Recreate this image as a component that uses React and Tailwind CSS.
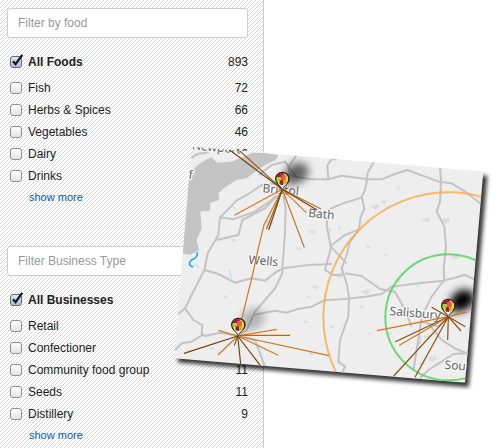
import React from "react";

const foods = [
  ["Fish", 72],
  ["Herbs & Spices", 66],
  ["Vegetables", 46],
  ["Dairy", 16],
  ["Drinks", 14],
];

const businesses = [
  ["Retail", 64],
  ["Confectioner", 13],
  ["Community food group", 11],
  ["Seeds", 11],
  ["Distillery", 9],
];

function FilterRow({ label, count, all = false }) {
  return (
    <label className="flex h-[22px] items-center pl-[3px]">
      <span className="relative flex h-3 w-3 shrink-0">
        <input
          type="checkbox"
          defaultChecked={all}
          className="peer h-3 w-3 appearance-none rounded-[3px] border border-[#909090] bg-linear-to-b from-white to-[#e4e4e4] checked:border-[#646a78] checked:from-[#e2e7f0] checked:to-[#b5bccb]"
        />
        <svg
          viewBox="0 0 14 14"
          className="pointer-events-none absolute -top-[2px] left-0 hidden h-[14px] w-[14px] peer-checked:block"
          fill="none"
          stroke="#151b2b"
          strokeWidth="2.3"
          aria-hidden="true"
        >
          <path d="M3 7.2 5.6 10.2 12.2 .8" />
        </svg>
      </span>
      <span className={all ? "ml-[6px] flex-1 font-bold" : "ml-[6px] flex-1"}>{label}</span>
      <span>{count}</span>
    </label>
  );
}

function FilterGroup({ placeholder, allLabel, total, items }) {
  return (
    <section className="pr-[15px] pl-[7px]">
      <input
        type="text"
        placeholder={placeholder}
        aria-label={placeholder}
        className="block h-[30px] w-full rounded-[3px] border border-[#ccc] bg-white px-[10px] text-[12px] outline-none placeholder:text-[#999]"
      />
      <div className="pt-[13px] pb-1">
        <FilterRow label={allLabel} count={total} all />
      </div>
      <div>
        {items.map(([label, count]) => (
          <FilterRow key={label} label={label} count={count} />
        ))}
      </div>
      <a href="#" className="ml-[22px] block w-fit text-[11px] leading-5 text-[#0062ad]">
        show more
      </a>
    </section>
  );
}

const roads = [
  "M80 55 Q95 38 118 40 L150 28",
  "M165 232 L215 182 250 162 290 135 352 128 375 105 400 112 440 118 490 118 530 107 610 118 650 118 690 102 728 90 770 106 822 125 860 130 905 158 945 190",
  "M490 118 L487 75 500 58 515 58",
  "M626 67 L608 98 605 125 600 150 590 170 598 205 586 235 582 270 555 305 545 345 530 385 545 430 552 470 550 530 525 600 520 665 540 680 530 700",
  "M825 82 L828 125 825 185 815 215 838 260 843 320 836 385 838 420 800 470 770 530 760 600 745 690",
  "M590 173 L540 188 510 200 490 210 485 255 497 320 545 370",
  "M582 268 L540 285 500 315 488 360 480 390 505 405 530 405",
  "M165 232 L160 285 128 340 118 390 85 455 60 505 40 522",
  "M155 300 L220 285 232 240 300 205 352 150 362 205 360 280 352 385 352 400",
  "M165 232 L205 238 270 215 320 180 352 150",
  "M118 390 L160 402 210 428 260 415 300 422 335 395 355 385 430 375 500 372",
  "M352 400 L330 445 300 480 270 515 245 570 218 588",
  "M265 525 L330 512 365 518 395 508 440 500 480 480 530 478 600 470 650 462 680 440 760 430 835 422 900 405 935 422",
  "M60 505 L85 540 112 555 110 580 120 588 165 578 218 588 270 600 285 640 300 680",
  "M115 583 L80 605 50 610 30 630",
  "M352 148 L375 105 370 80 395 45",
  "M395 112 L360 65 320 75 280 105",
  "M540 400 L590 408 645 447 690 455 715 500 740 560",
  "M850 530 L820 560 790 550 770 545",
  "M790 550 L830 600 870 625 910 642",
  "M910 640 L865 642 830 665 790 690 765 715",
];

const routes = [
  ["#70400f", "M352 148 L190 27"],
  ["#8b5014", "M352 148 L220 29"],
  ["#d4771b", "M352 148 L208 226"],
  ["#d4771b", "M352 148 L297 255 Q280 320 266 390 L218 588"],
  ["#a85e18", "M352 148 L304 268"],
  ["#70400f", "M352 148 L311 270"],
  ["#c56b17", "M352 148 L418 323"],
  ["#d4771b", "M352 148 L424 218"],
  ["#c56b17", "M352 148 L468 207"],
  ["#70400f", "M352 148 L456 210"],
  ["#d4771b", "M218 588 L160 571"],
  ["#d4771b", "M218 588 L335 568"],
  ["#c96300", "M218 586 L375 586"],
  ["#d4771b", "M218 588 L492 647"],
  ["#d4771b", "M218 588 L340 646"],
  ["#d4771b", "M218 588 L159 645"],
  ["#70400f", "M218 588 L57 640"],
  ["#8b5014", "M218 588 L208 617"],
  ["#70400f", "M218 588 L227 672"],
  ["#70400f", "M218 588 L286 676"],
  ["#d4771b", "M850 530 L636 572"],
  ["#8b4d10", "M850 530 L691 605"],
  ["#d4771b", "M850 530 L703 616"],
  ["#8b4d10", "M850 530 L686 708"],
  ["#8b4d10", "M850 530 L750 712"],
  ["#8b4d10", "M850 530 L848 600"],
  ["#8b4d10", "M850 530 L888 573"],
  ["#8b4d10", "M850 530 L901 560"],
  ["#c56b17", "M850 530 L905 516"],
  ["#8b4d10", "M850 530 L800 502"],
];

const towns = [
  ["Newport", 80, 28],
  ["f", 70, 116],
  ["Bristol", 292, 157],
  ["Bath", 429, 231],
  ["Wells", 250, 371],
  ["Salisbury", 673, 525],
  ["South", 838, 686],
];

const villages = [
  [310, 245, 15], [205, 300, 8], [440, 275, 9], [400, 325, 8], [180, 470, 7], [260, 360, 6],
  [630, 200, 12], [655, 185, 8], [700, 145, 6], [782, 238, 12], [840, 240, 14], [870, 350, 12],
  [610, 320, 7], [660, 345, 6], [450, 440, 10], [430, 470, 7], [520, 405, 14], [600, 455, 12],
  [615, 580, 6], [670, 580, 10], [590, 500, 7], [700, 420, 8], [785, 590, 10], [800, 655, 14],
  [770, 670, 9], [440, 640, 8], [140, 625, 7], [500, 560, 7], [420, 545, 6], [880, 670, 12],
];

function PinShadow({ x, y, shade }) {
  return (
    <g transform={`translate(${x} ${y})`} opacity={shade} filter="url(#soft)">
      <ellipse cx="42" cy="-50" rx="38" ry="30" transform="rotate(-30 42 -50)" fill="#000" />
      <path d="M0 -4 L20 -60 62 -30Z" fill="#000" opacity=".6" />
    </g>
  );
}

function Pin({ x, y }) {
  return (
    <g transform={`translate(${x} ${y})`}>
      <path d="M0 0 C-4 -12 -22 -18 -22 -34 A22 21 0 0 1 22 -34 C22 -18 4 -12 0 0Z" fill="#29232e" />
      <path d="M0 -3 C-3 -12 -11 -14 -14 -22 H14 C11 -14 3 -12 0 -3Z" fill="#eee" />
      <g clipPath="url(#pinFace)">
        <path d="M-18 -52h36v38h-36z" fill="#e8df18" />
        <path d="M-18 -52h22v14h-22z" fill="#a81440" />
        <path d="M-4 -45h14v16h-14z" fill="#f44c60" />
        <path d="M-18 -39h14v12h-14z" fill="#a7d52c" />
        <path d="M-8 -29h10v14h-10z" fill="#7b2840" />
        <path d="M2 -29h8v12h-8z" fill="#e9962c" />
      </g>
    </g>
  );
}

function FoodMap() {
  return (
    <svg
      viewBox="0 0 1005 750"
      className="absolute top-[140px] left-[165px] h-[250px] w-[335px]"
      role="img"
      aria-label="Map of food routes around Bristol, Wells and Salisbury"
    >
      <defs>
        <clipPath id="sheet">
          <path d="M80 20 955 95 900 728 27 655Z" />
        </clipPath>
        <clipPath id="pinFace">
          <circle cx="0" cy="-33" r="18" />
        </clipPath>
        <filter id="soft" x="-60%" y="-60%" width="220%" height="220%">
          <feGaussianBlur stdDeviation="12" />
        </filter>
        <filter id="drop" x="-10%" y="-10%" width="120%" height="120%">
          <feGaussianBlur stdDeviation="7" />
        </filter>
      </defs>
      <path d="M100 40 967 107 911 742 38 667Z" fill="#000" opacity=".8" filter="url(#drop)" />
      <g clipPath="url(#sheet)">
        <path d="M0 0H1005V750H0Z" fill="#eee" />
        <path
          d="M72 92 85 88 103 72 125 58 140 52 155 68 200 65 235 50 262 38 310 40 340 46 332 60 300 75 275 92 245 115 215 120 182 140 160 160 163 180 136 188 135 212 106 215 110 265 95 300 102 330 76 345 50 340Z"
          fill="#c4c4c4"
        />
        {villages.map(([x, y, r]) => (
          <path
            key={`${x}-${y}`}
            d={`M${x - r} ${y} l${r * 0.7} ${-r * 0.5} ${r * 0.5} ${r * 0.3} ${r * 0.6} ${-r * 0.5} ${r * 0.3} ${r} ${-r} ${r * 0.5}Z`}
            fill="#dcdedc"
          />
        ))}
        <g fill="none" stroke="#c3c3c3" strokeWidth="6" strokeLinejoin="round">
          {roads.map((d) => (
            <path key={d} d={d} />
          ))}
        </g>
        <g fill="none" stroke="#a9d9f2" strokeWidth="3">
          <path d="M203 200 L215 208" />
          <path d="M283 100 L295 108" strokeWidth="6" />
          <path d="M493 265 L500 272M520 268 L526 258M192 390 L200 415M755 440 L762 430M768 590 L765 612" />
          <path d="M97 337 Q98 352 84 358 Q68 366 76 377 L84 381" stroke="#22a8ee" strokeWidth="5" />
          <path d="M84 381 L94 373 101 383" />
        </g>
        <circle cx="850" cy="532" r="375" fill="none" stroke="#f9ae50" strokeWidth="6" opacity=".85" />
        <circle cx="850" cy="532" r="189" fill="none" stroke="#55d65a" strokeWidth="6" opacity=".85" />
        {towns.map(([name, x, y]) => (
          <text
            key={name}
            x={x}
            y={y}
            transform={`rotate(5 ${x} ${y})`}
            className="font-['Noto_Sans',sans-serif] text-[36px]"
            fill="#666"
            stroke="#f8f8f8"
            strokeWidth="8"
            strokeLinejoin="round"
            paintOrder="stroke"
          >
            {name}
          </text>
        ))}
        <PinShadow x={352} y={150} shade={0.6} />
        <PinShadow x={220} y={588} shade={0.25} />
        <PinShadow x={850} y={531} shade={1} />
        <g fill="none" strokeWidth="3.5">
          {routes.map(([color, d]) => (
            <path key={d} d={d} stroke={color} />
          ))}
        </g>
        <Pin x={352} y={150} />
        <Pin x={220} y={588} />
        <Pin x={850} y={531} />
      </g>
    </svg>
  );
}

export default function App() {
  return (
    <main className="relative flex min-h-screen overflow-hidden bg-white font-['Liberation_Sans',Arial,sans-serif] text-[12px] text-[#222]">
      <aside className="w-[264px] shrink-0 border-r border-[#ccc] bg-[linear-gradient(135deg,#fff_44%,#d8d8d8_44%,#d8d8d8_56%,#fff_56%)] bg-[length:4px_4px] pt-2">
        <FilterGroup placeholder="Filter by food" allLabel="All Foods" total={893} items={foods} />
        <div className="mt-[18px] mb-5 border-t border-[#eee]" />
        <FilterGroup placeholder="Filter Business Type" allLabel="All Businesses" total="" items={businesses} />
      </aside>
      <FoodMap />
    </main>
  );
}
